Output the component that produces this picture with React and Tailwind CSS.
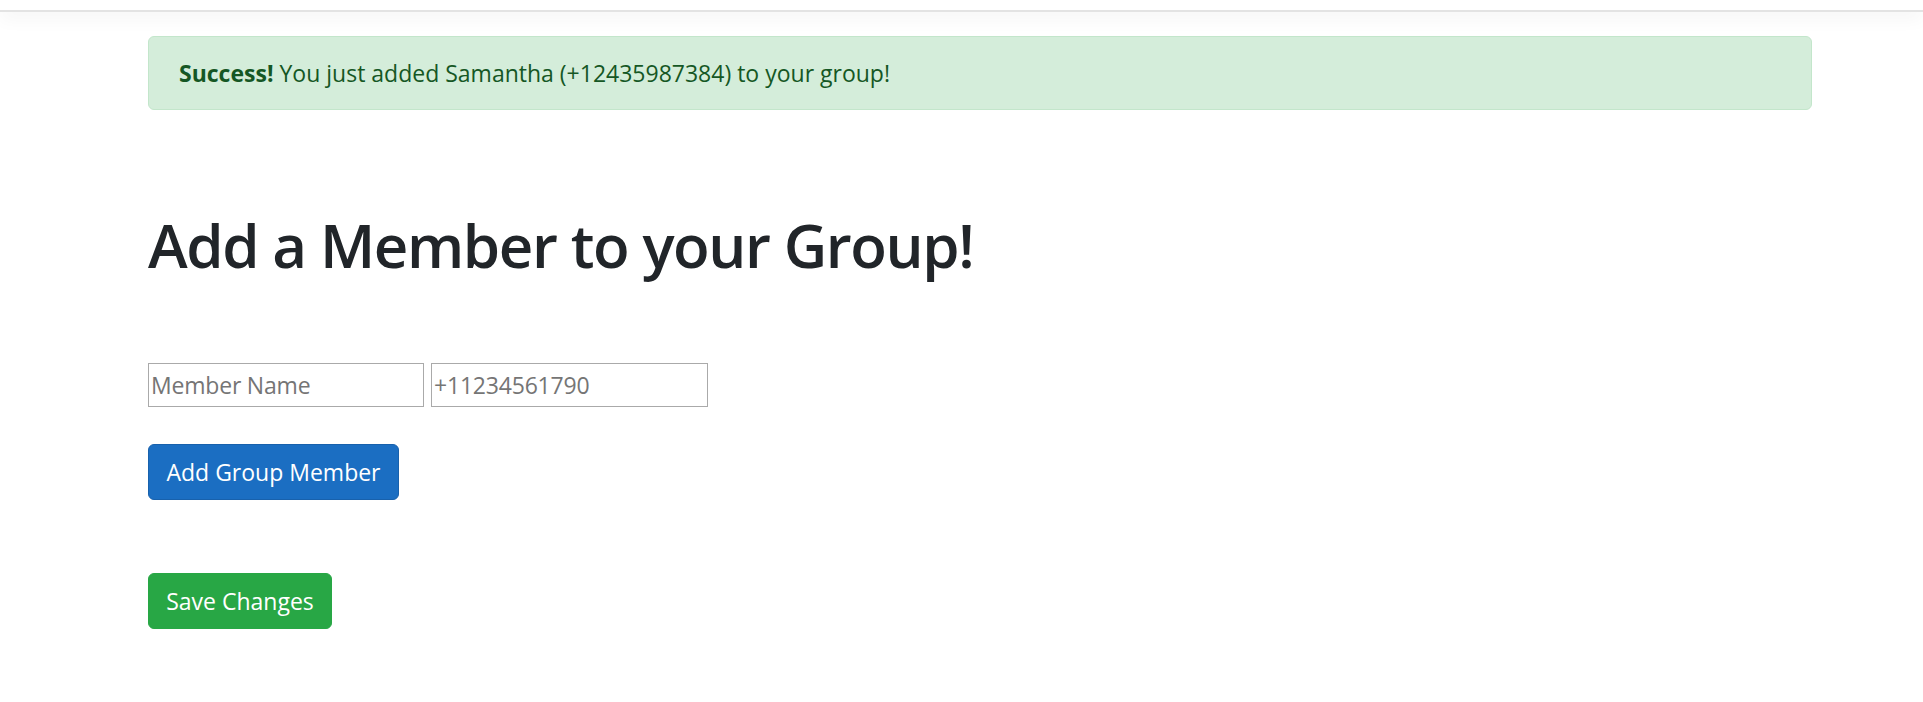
export default function App() {
  return (
    <div className="min-h-[702px] bg-white font-['Open_Sans','Noto_Sans',sans-serif] text-[#212529]">
      <div className="h-[12px] border-b-2 border-[#e3e3e3] bg-white shadow-[0_6px_18px_rgba(0,0,0,0.05)]" />
      <div className="pl-[148px] pt-[24px]">
        <div className="flex h-[74px] w-[1664px] items-center rounded-[6px] border border-[#c3e6cb] bg-[#d4edda] px-[30px] text-[23px] text-[#155724]">
          <strong className="mr-[6px] font-bold">Success!</strong>
          <span>You just added Samantha (+12435987384) to your group!</span>
        </div>
        <h1 className="mt-[99px] text-[60px] font-semibold leading-[72px] tracking-[-1.4px] text-[#212529]">
          Add a Member to your Group!
        </h1>
        <div className="mt-[82px] flex gap-[7px]">
          <input
            className="h-[44px] w-[276px] border border-[#aaaaaa] px-[2px] text-[23px] tracking-[-0.2px] outline-none placeholder:text-[#757575]"
            placeholder="Member Name"
          />
          <input
            className="h-[44px] w-[277px] border border-[#aaaaaa] px-[2px] text-[23px] tracking-[-0.2px] outline-none placeholder:text-[#757575]"
            placeholder="+11234561790"
          />
        </div>
        <div className="mt-[37px]">
          <button className="h-[56px] w-[251px] rounded-[6px] border border-[#1861ac] bg-[#1b6ec2] text-[23px] text-white">
            Add Group Member
          </button>
        </div>
        <div className="mt-[73px]">
          <button className="h-[56px] w-[184px] rounded-[6px] border border-[#28a745] bg-[#28a745] text-[23px] text-white">
            Save Changes
          </button>
        </div>
      </div>
    </div>
  );
}
